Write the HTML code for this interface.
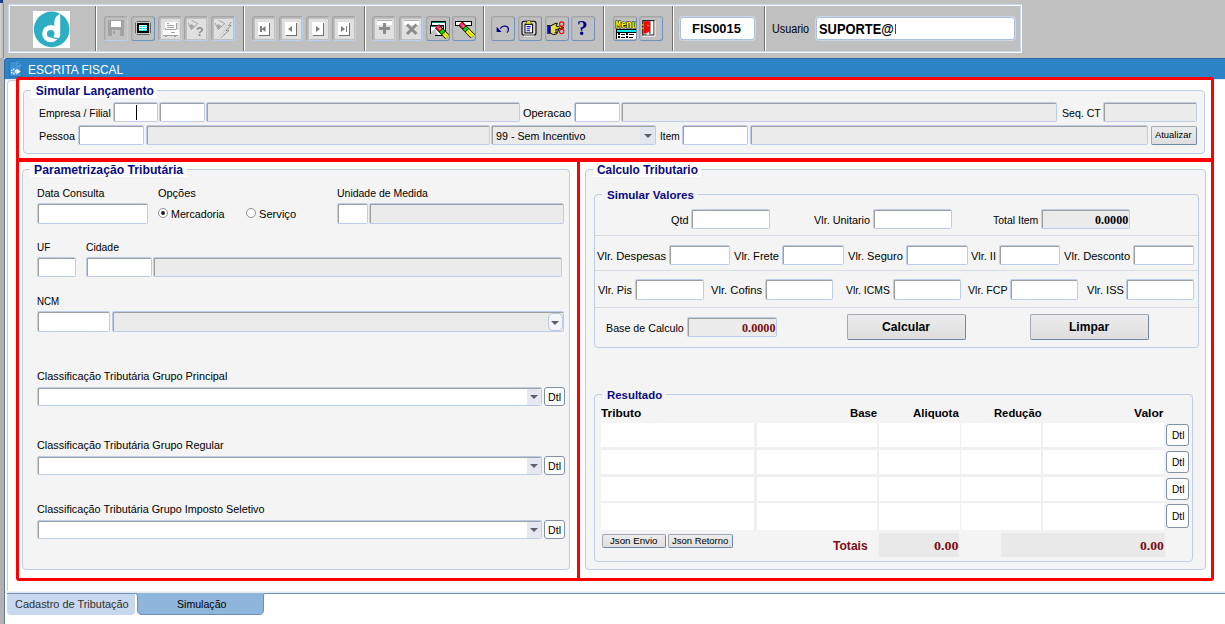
<!DOCTYPE html><html><head><meta charset="utf-8"><title>ESCRITA FISCAL</title><style>
*{box-sizing:border-box;margin:0;padding:0}
html,body{width:1225px;height:624px;overflow:hidden;background:#fff;font-family:"Liberation Sans",sans-serif;font-size:11px;color:#000}
.a{position:absolute}
.t{position:absolute;white-space:nowrap;transform-origin:0 0;color:#000}
.in{position:absolute;background:#fff;border:1px solid #bccee7;border-radius:1.5px;box-shadow:inset 1px 1px 0 #a0a0a0}
.g{position:absolute;background:#ebebeb;border:1px solid #bccee7;border-radius:1.5px;box-shadow:inset 1px 1px 0 #a0a0a0}
.gb{position:absolute;background:#f4f4f4;border:1px solid #bccde4;border-radius:4px}
.btn{position:absolute;background:linear-gradient(#ececec,#dedede);border:1px solid #a3a9b3;border-right-color:#6f87a6;border-bottom-color:#6f87a6;border-radius:2px}
.dtl{position:absolute;background:#fff;border:1px solid #8091a8;border-radius:3px}
.sep{position:absolute;top:6px;width:2px;height:45px;border-left:1px solid #707070;border-right:1px solid #fff}
.cell{position:absolute;background:#fff}
</style></head><body>
<div class="a" style="left:0px;top:0px;width:1225px;height:58px;background:#c0c0c0"></div>
<div class="a" style="left:0px;top:0px;width:4px;height:624px;background:#b2b2b2"></div>
<div class="a" style="left:0px;top:3px;width:4px;height:55px;background:linear-gradient(90deg,#d2d2d2,#bdbdbd 70%,#8e8e8e 76%)"></div>
<div class="a" style="left:4px;top:58px;width:1px;height:566px;background:#5f7896"></div>
<div class="a" style="left:0px;top:0px;width:3px;height:3px;background:#1c3f8c"></div>
<div class="a" style="left:8px;top:4px;width:1014px;height:49px;border:1px solid #c6d8f1;border-right-color:#fbfcfe;border-bottom-color:#fbfcfe"></div>
<div class="a" style="left:9px;top:5px;width:1012px;height:47px;border:1px solid #f7f9fd;border-right-color:#c6d8f1;border-bottom-color:#c6d8f1"></div>
<svg class="a" style="left:32.8px;top:10.8px" width="37.4" height="37.4" viewBox="0 0 37.4 37.4"><rect width="37.4" height="37.4" fill="#fff"/><circle cx="18.65" cy="18.4" r="17.8" fill="#2eaec2"/><circle cx="17.8" cy="22.7" r="8.6" fill="#fff"/><path d="M27.2 2.8 C23.5 4.6 21.3 7.4 21.3 11.4 L21.3 22 L24 26 L25 27.5 Q27.2 26.6 27.2 24.2 Z" fill="#fff"/><circle cx="17.7" cy="22.8" r="3.8" fill="#2eaec2"/><path d="M18.6 25.9 Q21.5 27.7 25.2 27.6" fill="none" stroke="#2eaec2" stroke-width="1.3"/></svg>
<div class="sep" style="left:95px"></div>
<div class="sep" style="left:243px"></div>
<div class="sep" style="left:364px"></div>
<div class="sep" style="left:483px"></div>
<div class="sep" style="left:603px"></div>
<div class="sep" style="left:672px"></div>
<div class="sep" style="left:764px"></div>
<div class="a" style="left:104px;top:16px;width:24px;height:25px;border:1px solid #a4a4a4;border-right-color:#b9d0ee;border-bottom-color:#b9d0ee;border-radius:3px;overflow:hidden;box-shadow:inset 1px 1px 0 #b6b6b6"><svg class="a" style="left:3px;top:3px;overflow:visible" width="16" height="17" viewBox="0 0 16 17" shape-rendering="crispEdges"><rect x="0" y="0" width="16" height="16" rx="1" fill="#a2a2a2"/><rect x="3" y="1" width="10" height="6" fill="#fff"/><rect x="4" y="10" width="8" height="6" fill="#c0c0c0"/><rect x="5" y="11" width="2" height="3" fill="#a2a2a2"/></svg></div>
<div class="a" style="left:130.5px;top:16px;width:24px;height:25px;border:1px solid #a4a4a4;border-right-color:#6d90bf;border-bottom-color:#6d90bf;border-radius:3px;overflow:hidden;box-shadow:inset 1px 1px 0 #b6b6b6"><svg class="a" style="left:3px;top:3px;overflow:visible" width="16" height="17" viewBox="0 0 16 17" shape-rendering="crispEdges"><rect x="0.5" y="1.5" width="15" height="13" rx="2" fill="#000" shape-rendering="auto"/><rect x="1.5" y="2.5" width="13" height="11" fill="none" stroke="#c8c8c8" stroke-width="1"/><rect x="3" y="4" width="10" height="8" fill="#00e5ee"/><g fill="#e0ffff"><rect x="4" y="5" width="8" height="1"/><rect x="4" y="7" width="8" height="1"/><rect x="4" y="9" width="8" height="1"/><rect x="4" y="4" width="1" height="8" opacity=".5"/><rect x="7" y="4" width="1" height="8" opacity=".5"/><rect x="10" y="4" width="1" height="8" opacity=".5"/></g><rect x="3.5" y="4.5" width="9" height="7" fill="none" stroke="#000" stroke-width="1"/></svg></div>
<div class="a" style="left:157.5px;top:16px;width:24px;height:25px;border:1px solid #a4a4a4;border-right-color:#b9d0ee;border-bottom-color:#b9d0ee;border-radius:3px;overflow:hidden;box-shadow:inset 1px 1px 0 #b6b6b6"><div class="a" style="left:2px;top:2px;width:19px;height:20px;background:#e0e0e0"></div><svg class="a" style="left:3px;top:3px;overflow:visible" width="16" height="17" viewBox="0 0 16 17" shape-rendering="crispEdges"><rect x="3" y="2" width="12" height="7" fill="#fff"/><rect x="5" y="3" width="2" height="1" fill="#a2a2a2"/><rect x="5" y="5" width="7" height="1" fill="#a2a2a2"/><rect x="5" y="7" width="7" height="1" fill="#a2a2a2"/><rect x="3" y="8" width="1" height="2" fill="#a2a2a2"/><rect x="3" y="9" width="11" height="1" fill="#a2a2a2"/><rect x="14" y="3" width="1" height="6" fill="#a2a2a2"/><rect x="1" y="10" width="16" height="5" fill="#fff"/><rect x="9" y="12" width="4" height="1" fill="#a2a2a2"/><rect x="1" y="15" width="15" height="1" fill="#a2a2a2"/><rect x="3" y="16" width="2" height="1" fill="#a2a2a2"/><rect x="12" y="16" width="2" height="1" fill="#a2a2a2"/></svg></div>
<div class="a" style="left:184px;top:16px;width:24px;height:25px;border:1px solid #a4a4a4;border-right-color:#b9d0ee;border-bottom-color:#b9d0ee;border-radius:3px;overflow:hidden;box-shadow:inset 1px 1px 0 #b6b6b6"><div class="a" style="left:2px;top:2px;width:19px;height:20px;background:#e0e0e0"></div><svg class="a" style="left:3px;top:3px;overflow:visible" width="16" height="17" viewBox="0 0 16 17" shape-rendering="crispEdges"><g shape-rendering="auto"><path d="M0.2 3 L3.2 9.6 L9.8 3.6 L3.6 0.2" fill="none" stroke="#9a9a9a" stroke-width="0.9"/><path d="M1.6 5.2 L3.2 9 L6.2 6.2 L3.6 4 Z" fill="#a4a4a4"/></g></svg><div class="a" style="left:10.6px;top:8px;font:bold 12.5px/14px 'Liberation Sans',sans-serif;color:#8a8a8a;will-change:transform">?</div></div>
<div class="a" style="left:210.5px;top:16px;width:24px;height:25px;border:1px solid #a4a4a4;border-right-color:#b9d0ee;border-bottom-color:#b9d0ee;border-radius:3px;overflow:hidden;box-shadow:inset 1px 1px 0 #b6b6b6"><div class="a" style="left:2px;top:2px;width:19px;height:20px;background:#e0e0e0"></div><svg class="a" style="left:3px;top:3px;overflow:visible" width="16" height="17" viewBox="0 0 16 17" shape-rendering="crispEdges"><g shape-rendering="auto"><path d="M0.2 3 L3.2 9.6 L9.8 3.6 L3.6 0.2" fill="none" stroke="#9a9a9a" stroke-width="0.9"/><path d="M1.6 5.2 L3.2 9 L6.2 6.2 L3.6 4 Z" fill="#a4a4a4"/></g><g shape-rendering="auto" fill="none" stroke-width="1"><path d="M13 2.4 L10.4 5.7 L12.8 5.7 L7.6 10.8 L10.5 10.8 L3.4 17" stroke="#cdcdcd"/><path d="M16.3 2.2 L13.7 5.5 L16.1 5.5 L11 10.6 L13.9 10.6 L6 17.6" stroke="#6e6e6e" stroke-dasharray="1.2 .5"/></g></svg></div>
<div class="a" style="left:252px;top:16px;width:24px;height:25px;border:1px solid #a4a4a4;border-right-color:#b9d0ee;border-bottom-color:#b9d0ee;border-radius:3px;overflow:hidden;box-shadow:inset 1px 1px 0 #b6b6b6"><div class="a" style="left:2px;top:2px;width:19px;height:20px;background:#e0e0e0"></div><svg class="a" style="left:3px;top:3px;overflow:visible" width="16" height="17" viewBox="0 0 16 17" shape-rendering="crispEdges"><rect x="2" y="2" width="12" height="13" fill="#fff"/><rect x="13" y="3" width="1" height="13" fill="#707070"/><rect x="3" y="15" width="11" height="1" fill="#707070"/><rect x="4" y="6" width="1.5" height="6" fill="#808080"/><path d="M9.5 6 L9.5 12 L5.5 9 Z" fill="#808080" shape-rendering="auto"/></svg></div>
<div class="a" style="left:278.5px;top:16px;width:24px;height:25px;border:1px solid #a4a4a4;border-right-color:#b9d0ee;border-bottom-color:#b9d0ee;border-radius:3px;overflow:hidden;box-shadow:inset 1px 1px 0 #b6b6b6"><div class="a" style="left:2px;top:2px;width:19px;height:20px;background:#e0e0e0"></div><svg class="a" style="left:3px;top:3px;overflow:visible" width="16" height="17" viewBox="0 0 16 17" shape-rendering="crispEdges"><rect x="2" y="2" width="12" height="13" fill="#fff"/><rect x="13" y="3" width="1" height="13" fill="#707070"/><rect x="3" y="15" width="11" height="1" fill="#707070"/><path d="M9 6 L9 12 L5 9 Z" fill="#808080" shape-rendering="auto"/></svg></div>
<div class="a" style="left:305.5px;top:16px;width:24px;height:25px;border:1px solid #a4a4a4;border-right-color:#b9d0ee;border-bottom-color:#b9d0ee;border-radius:3px;overflow:hidden;box-shadow:inset 1px 1px 0 #b6b6b6"><div class="a" style="left:2px;top:2px;width:19px;height:20px;background:#e0e0e0"></div><svg class="a" style="left:3px;top:3px;overflow:visible" width="16" height="17" viewBox="0 0 16 17" shape-rendering="crispEdges"><rect x="2" y="2" width="12" height="13" fill="#fff"/><rect x="13" y="3" width="1" height="13" fill="#707070"/><rect x="3" y="15" width="11" height="1" fill="#707070"/><path d="M6 6 L6 12 L10 9 Z" fill="#808080" shape-rendering="auto"/></svg></div>
<div class="a" style="left:332px;top:16px;width:24px;height:25px;border:1px solid #a4a4a4;border-right-color:#b9d0ee;border-bottom-color:#b9d0ee;border-radius:3px;overflow:hidden;box-shadow:inset 1px 1px 0 #b6b6b6"><div class="a" style="left:2px;top:2px;width:19px;height:20px;background:#e0e0e0"></div><svg class="a" style="left:3px;top:3px;overflow:visible" width="16" height="17" viewBox="0 0 16 17" shape-rendering="crispEdges"><rect x="2" y="2" width="12" height="13" fill="#fff"/><rect x="13" y="3" width="1" height="13" fill="#707070"/><rect x="3" y="15" width="11" height="1" fill="#707070"/><path d="M5 6 L5 12 L9 9 Z" fill="#808080" shape-rendering="auto"/><rect x="9.5" y="6" width="1.5" height="6" fill="#808080"/></svg></div>
<div class="a" style="left:372px;top:16px;width:24px;height:25px;border:1px solid #a4a4a4;border-right-color:#b9d0ee;border-bottom-color:#b9d0ee;border-radius:3px;overflow:hidden;box-shadow:inset 1px 1px 0 #b6b6b6"><div class="a" style="left:2px;top:2px;width:19px;height:20px;background:#e0e0e0"></div><svg class="a" style="left:3px;top:3px;overflow:visible" width="16" height="17" viewBox="0 0 16 17" shape-rendering="crispEdges"><rect x="1" y="1" width="15" height="4" fill="#fff"/><rect x="1" y="0" width="15" height="1" fill="#b0b0b0"/><rect x="7" y="3" width="3" height="11" fill="#8c8c8c"/><rect x="3" y="7" width="11" height="3" fill="#8c8c8c"/></svg></div>
<div class="a" style="left:398.5px;top:16px;width:24px;height:25px;border:1px solid #a4a4a4;border-right-color:#b9d0ee;border-bottom-color:#b9d0ee;border-radius:3px;overflow:hidden;box-shadow:inset 1px 1px 0 #b6b6b6"><div class="a" style="left:2px;top:2px;width:19px;height:20px;background:#e0e0e0"></div><svg class="a" style="left:3px;top:3px;overflow:visible" width="16" height="17" viewBox="0 0 16 17" shape-rendering="crispEdges"><rect x="1" y="1" width="15" height="4" fill="#fff"/><rect x="1" y="0" width="15" height="1" fill="#b0b0b0"/><g shape-rendering="auto" stroke="#8c8c8c" stroke-width="3"><path d="M4 4.5 L13.5 14"/><path d="M13.5 4.5 L4 14"/></g></svg></div>
<div class="a" style="left:425.5px;top:16px;width:24px;height:25px;border:1px solid #a4a4a4;border-right-color:#6d90bf;border-bottom-color:#6d90bf;border-radius:3px;overflow:hidden;box-shadow:inset 1px 1px 0 #b6b6b6"><svg class="a" style="left:3px;top:3px;overflow:visible" width="16" height="17" viewBox="0 0 16 17" shape-rendering="crispEdges"><rect x="1.5" y="1.5" width="14" height="10" fill="#fff" stroke="#000" stroke-width="1"/><rect x="2" y="2" width="13" height="1" fill="#008b8b"/><rect x="0.5" y="5.5" width="13" height="10" fill="#fff" stroke="#000" stroke-width="1"/><rect x="1" y="6" width="12" height="1.4" fill="#008b8b"/><path d="M1 15 L1 12 L5 9 L8 15 Z" fill="#c0c0c0" shape-rendering="auto"/><rect x="0" y="14" width="5" height="3" fill="#c0c0c0"/><g shape-rendering="auto" transform="translate(7.4,6.6) rotate(46)"><rect x="-0.5" y="-2.8" width="15.0" height="5.6" fill="#000"/><rect x="-0.8" y="-2.1" width="5.8" height="4.2" rx="1.2" fill="#ff1a1a"/><rect x="0.2" y="-0.9000000000000001" width="4" height="1.8000000000000003" fill="#ff33dd"/><rect x="2.8" y="-1.1" width="1.6" height="1.6" fill="#ffd000"/><rect x="5.4" y="-2.1" width="3.2" height="4.2" fill="#00dd00"/><rect x="9.2" y="-2.1" width="5.300000000000001" height="4.2" fill="#ffff00"/><rect x="9.2" y="-0.3" width="5.300000000000001" height="0.7" fill="#b0b000"/></g></svg></div>
<div class="a" style="left:452px;top:16px;width:24px;height:25px;border:1px solid #a4a4a4;border-right-color:#6d90bf;border-bottom-color:#6d90bf;border-radius:3px;overflow:hidden;box-shadow:inset 1px 1px 0 #b6b6b6"><svg class="a" style="left:3px;top:3px;overflow:visible" width="16" height="17" viewBox="0 0 16 17" shape-rendering="crispEdges"><rect x="-0.2" y="1.5" width="15.5" height="4" fill="#fff" stroke="#000" stroke-width="1"/><g shape-rendering="auto" transform="translate(4.8,3.8) rotate(46)"><rect x="-0.5" y="-2.8" width="18.0" height="5.6" fill="#000"/><rect x="-0.8" y="-2.1" width="5.8" height="4.2" rx="1.2" fill="#ff1a1a"/><rect x="0.2" y="-0.9000000000000001" width="4" height="1.8000000000000003" fill="#ff33dd"/><rect x="2.8" y="-1.1" width="1.6" height="1.6" fill="#ffd000"/><rect x="5.4" y="-2.1" width="3.2" height="4.2" fill="#00dd00"/><rect x="9.2" y="-2.1" width="8.3" height="4.2" fill="#ffff00"/><rect x="9.2" y="-0.3" width="8.3" height="0.7" fill="#b0b000"/></g></svg></div>
<div class="a" style="left:490.5px;top:16px;width:24px;height:25px;border:1px solid #a4a4a4;border-right-color:#6d90bf;border-bottom-color:#6d90bf;border-radius:3px;overflow:hidden;box-shadow:inset 1px 1px 0 #b6b6b6"><svg class="a" style="left:3px;top:3px;overflow:visible" width="16" height="17" viewBox="0 0 16 17" shape-rendering="crispEdges"><g shape-rendering="auto"><path d="M5.2 8.6 Q7 6.2 9 6.2 L10.6 6.2 Q13.4 6.6 13.4 9.4 Q13.4 11.2 12 12.6" fill="none" stroke="#00008b" stroke-width="1.2"/><path d="M1.6 6.8 L1.6 12 L6.6 12 Z" fill="#00008b"/></g></svg></div>
<div class="a" style="left:517.5px;top:16px;width:24px;height:25px;border:1px solid #a4a4a4;border-right-color:#6d90bf;border-bottom-color:#6d90bf;border-radius:3px;overflow:hidden;box-shadow:inset 1px 1px 0 #b6b6b6"><svg class="a" style="left:3px;top:3px;overflow:visible" width="16" height="17" viewBox="0 0 16 17" shape-rendering="crispEdges"><g shape-rendering="auto"><rect x="0" y="1.2" width="14" height="14" rx="2.2" fill="#d4d4d4" stroke="#000" stroke-width="1.1"/><path d="M2 16 L12 16" stroke="#fff" stroke-width="1.2"/><rect x="3" y="4.3" width="7.6" height="8.6" fill="#fff" stroke="#000" stroke-width="1"/><path d="M4.6 6.6 L8.6 6.6 M4.6 8.7 L8 8.7 M4.6 10.7 L8 10.7" stroke="#0000ff" stroke-width="1.1"/><path d="M3.4 4 L5.8 0.6 L7.6 0.6 L10 4 Z" fill="#ffff00" stroke="#000" stroke-width=".5"/><circle cx="6.7" cy="2.2" r=".8" fill="#c0c0c0"/></g></svg></div>
<div class="a" style="left:544.5px;top:16px;width:24px;height:25px;border:1px solid #a4a4a4;border-right-color:#6d90bf;border-bottom-color:#6d90bf;border-radius:3px;overflow:hidden;box-shadow:inset 1px 1px 0 #b6b6b6"><svg class="a" style="left:3px;top:3px;overflow:visible" width="16" height="17" viewBox="0 0 16 17" shape-rendering="crispEdges"><g shape-rendering="auto"><rect x="-1.4" y="5.3" width="2.6" height="8.3" fill="#0000ff" stroke="#000" stroke-width=".5"/><path d="M1.2 6.2 L4 4.6 L7 3.2 L8.4 3.4 L7 5.8 L9 7 L14.4 7 L14.4 8.4 L9.4 8.6 L9.6 10 L9 11.4 L8.4 12.6 L7.6 14 L4.4 14.6 L1.2 13 Z" fill="#e6e058" stroke="#000" stroke-width="1"/><path d="M6.2 9.4 L9.2 9.4 M6 11 L8.8 11 M5.6 12.6 L8 12.6" stroke="#000" stroke-width=".9"/><path d="M7 7.6 L13 7.6" stroke="#f4f400" stroke-width=".9" stroke-dasharray="1 1"/><g fill="none" stroke="#ff0000" stroke-width="1.1"><circle cx="12.7" cy="4.1" r="2.2"/><circle cx="12.7" cy="11.4" r="2.2"/><path d="M12 6 L13.4 9.4 M13.4 6 L12 9.4"/></g></g></svg></div>
<div class="a" style="left:570.5px;top:16px;width:24px;height:25px;border:1px solid #a4a4a4;border-right-color:#6d90bf;border-bottom-color:#6d90bf;border-radius:3px;overflow:hidden;box-shadow:inset 1px 1px 0 #b6b6b6"><svg class="a" style="left:3px;top:3px;overflow:visible" width="16" height="17" viewBox="0 0 16 17" shape-rendering="crispEdges"></svg><div class="a" style="left:5.6px;top:-2.5px;font:bold 21.5px/26px 'Liberation Serif',serif;color:#00008b;will-change:transform">?</div></div>
<div class="a" style="left:612.5px;top:16px;width:24px;height:25px;border:1px solid #a4a4a4;border-right-color:#6d90bf;border-bottom-color:#6d90bf;border-radius:3px;overflow:hidden;box-shadow:inset 1px 1px 0 #b6b6b6"><svg class="a" style="left:3px;top:3px;overflow:visible" width="16" height="17" viewBox="0 0 16 17" shape-rendering="crispEdges"><g shape-rendering="auto"><text x="-1.4" y="7.6" font-family="Liberation Mono,monospace" font-weight="bold" font-size="10.5" fill="#ffff00" stroke="#000" stroke-width="1.1" paint-order="stroke" textLength="21.5" lengthAdjust="spacingAndGlyphs">Menu</text></g><rect x="-1.5" y="9" width="20" height="1" fill="#000"/><rect x="-0.5" y="10" width="19" height="1.5" fill="#00f0f0"/><rect x="-1.5" y="11.5" width="20" height="1" fill="#000"/><rect x="-0.5" y="12.5" width="19" height="6" fill="#fff"/><rect x="-1.5" y="9" width="1" height="10" fill="#000"/><g fill="#000"><rect x="1" y="13.3" width="2" height="1.4"/><rect x="4" y="13.6" width="4" height="1"/><rect x="9" y="13.3" width="2" height="1.4"/><rect x="12" y="13.6" width="5" height="1"/><rect x="1" y="16.4" width="2" height="1.4"/><rect x="4" y="16.7" width="4" height="1"/><rect x="9" y="16.4" width="2" height="1.4"/><rect x="12" y="16.7" width="4" height="1"/></g></svg></div>
<div class="a" style="left:638.5px;top:16px;width:24px;height:25px;border:1px solid #a4a4a4;border-right-color:#6d90bf;border-bottom-color:#6d90bf;border-radius:3px;overflow:hidden;box-shadow:inset 1px 1px 0 #b6b6b6"><svg class="a" style="left:3px;top:3px;overflow:visible" width="16" height="17" viewBox="0 0 16 17" shape-rendering="crispEdges"><g shape-rendering="auto"><rect x="-0.2" y="0.7" width="11.2" height="14.4" fill="#d8d8d8" stroke="#000" stroke-width="1"/><path d="M-0.5 16.1 L12 16.1 M12 1 L12 16" stroke="#fff" stroke-width="1"/><rect x="7" y="1.4" width="3.2" height="12.4" fill="#fff"/><rect x="6.4" y="1.4" width="1" height="12.4" fill="#000"/><path d="M6.4 13.8 L4 14.8" stroke="#fff" stroke-width="1"/><path d="M0.5 1.2 L6.4 1.2 L6.4 11.6 L2.6 13.4 L0.5 13.4 Z" fill="#ff0000"/><rect x="4.2" y="4.9" width="1.3" height="1.3" fill="#ffff00"/><rect x="-0.8" y="4.2" width="1.3" height="1.1" fill="#ffff00"/><rect x="-0.8" y="7.8" width="1.3" height="1.1" fill="#ffff00"/></g></svg></div>
<div class="a" style="left:680px;top:17px;width:75px;height:23px;background:#fff;border:1px solid #a9c0e2;border-radius:3px;box-shadow:0 0 0 1px rgba(215,228,245,.6)"></div>
<div class="t" style="left:692.00px;top:21px;font-size:13.5px;line-height:16px;font-weight:bold;transform:scaleX(0.9583);">FIS0015</div>
<div class="t" style="left:772.00px;top:22px;font-size:12px;line-height:14px;transform:scaleX(0.8973);">Usuario</div>
<div class="a" style="left:816px;top:17px;width:199px;height:23px;background:#fff;border:1px solid #a9c0e2;border-radius:3px;box-shadow:0 0 0 1px rgba(215,228,245,.6)"></div>
<div class="t" style="left:819.00px;top:20px;font-size:15px;line-height:18px;font-weight:bold;transform:scaleX(0.8584);">SUPORTE@</div>
<div class="a" style="left:895px;top:24px;width:1px;height:10px;background:#444"></div>
<div class="a" style="left:4px;top:58px;width:1221px;height:21px;background:#fff"></div>
<div class="a" style="left:4px;top:58px;width:1221px;height:21px;background:#2c83c6;border-top-left-radius:3px;border-left:1px solid #2a6aa8"></div>
<div class="a" style="left:6px;top:58px;width:1219px;height:1px;background:#2a64a6"></div>
<div class="t" style="left:28.10px;top:63px;font-size:12px;line-height:14px;color:#fff;transform:scaleX(0.9937);">ESCRITA FISCAL</div>
<svg class="a" style="left:9px;top:61px" width="13" height="16" viewBox="0 0 13 16"><path d="M0.5 0.5 L8 0.5 L12.5 5 L12.5 15.5 L0.5 15.5 Z" fill="#3e92d4" stroke="#2872b4" stroke-width="1"/><path d="M8 0.5 L8 5 L12.5 5 Z" fill="#2c83c6" stroke="#5fa5dd" stroke-width=".8"/><circle cx="4.6" cy="10.5" r="2.1" fill="none" stroke="#fff" stroke-width="1.8" stroke-dasharray="1.2 .9"/><path d="M7.3 7.6 L11.6 10.5 L7.3 13.4 Z" fill="#fff"/></svg>
<div class="a" style="left:5px;top:79px;width:1220px;height:1px;background:#e6ebf3"></div>
<div class="a" style="left:7px;top:80px;width:13px;height:513px;border-left:1px solid #c3cfdf;border-top:1px solid #c3cfdf;border-top-left-radius:4px"></div>
<div class="a" style="left:5px;top:591px;width:1220px;height:2px;background:linear-gradient(#f4f6fa,#dfe6f0)"></div>
<div class="a" style="left:7px;top:593px;width:1218px;height:1px;background:#7391b5"></div>
<div class="a" style="left:16px;top:77px;width:1198px;height:504px;border:3px solid #fe0000;border-radius:3px"></div>
<div class="a" style="left:17px;top:158px;width:1196px;height:4px;background:#fe0000"></div>
<div class="a" style="left:577px;top:159px;width:3px;height:421px;background:#fe0000"></div>
<div class="gb" style="left:23px;top:90px;width:1182px;height:64px;"></div>
<div class="a" style="left:31px;top:83px;width:126px;height:15px;background:#fff"></div>
<div class="t" style="left:35.80px;top:84px;font-size:12px;line-height:14px;font-weight:bold;color:#0a0a82;">Simular Lançamento</div>
<div class="t" style="left:38.80px;top:107px;font-size:11px;line-height:13px;transform:scaleX(0.9460);">Empresa / Filial</div>
<div class="in" style="left:113px;top:102px;width:45px;height:20px;"><div class="a" style="left:22px;top:2px;width:1px;height:15px;background:#000"></div></div>
<div class="in" style="left:159px;top:102px;width:46px;height:20px;"></div>
<div class="g" style="left:206px;top:102px;width:314px;height:20px;"></div>
<div class="t" style="left:522.90px;top:107px;font-size:11px;line-height:13px;">Operacao</div>
<div class="in" style="left:574px;top:102px;width:46px;height:20px;"></div>
<div class="g" style="left:621px;top:102px;width:436px;height:20px;"></div>
<div class="t" style="left:1061.70px;top:107px;font-size:11px;line-height:13px;transform:scaleX(0.9617);">Seq. CT</div>
<div class="g" style="left:1103px;top:102px;width:94px;height:20px;"></div>
<div class="t" style="left:38.80px;top:130px;font-size:11px;line-height:13px;transform:scaleX(0.9812);">Pessoa</div>
<div class="in" style="left:78px;top:125px;width:66px;height:20px;"></div>
<div class="g" style="left:146px;top:125px;width:344px;height:20px;"></div>
<div class="g" style="left:491px;top:125px;width:165px;height:20px;"><div class="a" style="right:0;top:1px;width:15px;height:17px;background:#e2e6ee;border-radius:0 2px 2px 0"></div><div class="a" style="right:3px;top:8px;border:4px solid transparent;border-top:4px solid #5a5f6a;border-bottom:0"></div></div>
<div class="t" style="left:495.90px;top:130px;font-size:11px;line-height:13px;transform:scaleX(0.9749);">99 - Sem Incentivo</div>
<div class="t" style="left:660.00px;top:130px;font-size:11px;line-height:13px;transform:scaleX(0.9209);">Item</div>
<div class="in" style="left:682px;top:125px;width:66px;height:20px;"></div>
<div class="g" style="left:750px;top:125px;width:398px;height:20px;"></div>
<div class="btn" style="left:1151px;top:126px;width:46px;height:19px;"></div>
<div class="t" style="left:1155.10px;top:130px;font-size:9px;line-height:11px;transform:scaleX(1.0424);">Atualizar</div>
<div class="gb" style="left:22px;top:169px;width:548px;height:401px;"></div>
<div class="a" style="left:30px;top:163px;width:157px;height:14px;background:#fff"></div>
<div class="t" style="left:34.20px;top:163px;font-size:12px;line-height:14px;font-weight:bold;color:#0a0a82;transform:scaleX(1.0162);">Parametrização Tributária</div>
<div class="t" style="left:36.60px;top:187px;font-size:11px;line-height:13px;transform:scaleX(0.9670);">Data Consulta</div>
<div class="in" style="left:37px;top:203px;width:111px;height:21px;"></div>
<div class="t" style="left:157.90px;top:187px;font-size:11px;line-height:13px;">Opções</div>
<div class="a" style="left:158px;top:208px;width:10px;height:10px;border:1px solid #8e8e8e;border-radius:50%;background:#fff"><div class="a" style="left:2px;top:2px;width:4px;height:4px;border-radius:50%;background:#222"></div></div>
<div class="t" style="left:171.10px;top:208px;font-size:11px;line-height:13px;transform:scaleX(0.9724);">Mercadoria</div>
<div class="a" style="left:246px;top:208px;width:10px;height:10px;border:1px solid #8e8e8e;border-radius:50%;background:#fff"></div>
<div class="t" style="left:259.00px;top:208px;font-size:11px;line-height:13px;transform:scaleX(1.0115);">Serviço</div>
<div class="t" style="left:337.10px;top:187px;font-size:11px;line-height:13px;transform:scaleX(0.9518);">Unidade de Medida</div>
<div class="in" style="left:337px;top:203px;width:31px;height:21px;"></div>
<div class="g" style="left:369px;top:203px;width:195px;height:21px;"></div>
<div class="t" style="left:36.70px;top:241px;font-size:11px;line-height:13px;transform:scaleX(0.9002);">UF</div>
<div class="in" style="left:37px;top:257px;width:39px;height:20px;"></div>
<div class="t" style="left:86.30px;top:241px;font-size:11px;line-height:13px;transform:scaleX(0.9439);">Cidade</div>
<div class="in" style="left:86px;top:257px;width:66px;height:20px;"></div>
<div class="g" style="left:153px;top:257px;width:409px;height:20px;"></div>
<div class="t" style="left:36.80px;top:295px;font-size:11px;line-height:13px;transform:scaleX(0.8862);">NCM</div>
<div class="in" style="left:37px;top:311px;width:73px;height:21px;"></div>
<div class="g" style="left:112px;top:311px;width:452px;height:21px;"><div class="a" style="right:0px;top:1px;width:15px;height:18px;border:1px solid #b9c9df;border-radius:5px;background:#f3f5f8"></div><div class="a" style="right:4px;top:9px;border:4px solid transparent;border-top:4px solid #5a5f6a;border-bottom:0"></div></div>
<div class="t" style="left:36.60px;top:370px;font-size:11px;line-height:13px;transform:scaleX(0.9882);">Classificação Tributária Grupo Principal</div>
<div class="in" style="left:37px;top:387px;width:505px;height:19px;"><div class="a" style="right:0;top:1px;width:14px;height:16px;background:#e4e8f0;border-radius:0 2px 2px 0"></div><div class="a" style="right:3px;top:7px;border:4px solid transparent;border-top:4px solid #5a5f6a;border-bottom:0"></div></div>
<div class="dtl" style="left:544px;top:387px;width:21px;height:19px;"></div>
<div class="t" style="left:548.00px;top:391px;font-size:11px;line-height:13px;transform:scaleX(0.9670);">Dtl</div>
<div class="t" style="left:36.60px;top:439px;font-size:11px;line-height:13px;transform:scaleX(0.9878);">Classificação Tributária Grupo Regular</div>
<div class="in" style="left:37px;top:456px;width:505px;height:19px;"><div class="a" style="right:0;top:1px;width:14px;height:16px;background:#e4e8f0;border-radius:0 2px 2px 0"></div><div class="a" style="right:3px;top:7px;border:4px solid transparent;border-top:4px solid #5a5f6a;border-bottom:0"></div></div>
<div class="dtl" style="left:544px;top:456px;width:21px;height:19px;"></div>
<div class="t" style="left:548.00px;top:460px;font-size:11px;line-height:13px;transform:scaleX(0.9670);">Dtl</div>
<div class="t" style="left:36.60px;top:503px;font-size:11px;line-height:13px;transform:scaleX(0.9819);">Classificação Tributária Grupo Imposto Seletivo</div>
<div class="in" style="left:37px;top:520px;width:505px;height:19px;"><div class="a" style="right:0;top:1px;width:14px;height:16px;background:#e4e8f0;border-radius:0 2px 2px 0"></div><div class="a" style="right:3px;top:7px;border:4px solid transparent;border-top:4px solid #5a5f6a;border-bottom:0"></div></div>
<div class="dtl" style="left:544px;top:520px;width:21px;height:19px;"></div>
<div class="t" style="left:548.00px;top:524px;font-size:11px;line-height:13px;transform:scaleX(0.9670);">Dtl</div>
<div class="gb" style="left:585px;top:169px;width:621px;height:401px;"></div>
<div class="a" style="left:593px;top:163px;width:108px;height:14px;background:#fff"></div>
<div class="t" style="left:596.70px;top:163px;font-size:12px;line-height:14px;font-weight:bold;color:#0a0a82;transform:scaleX(0.9892);">Calculo Tributario</div>
<div class="gb" style="left:594px;top:194px;width:605px;height:154px;"></div>
<div class="a" style="left:602px;top:188px;width:96px;height:13px;background:#f4f4f4"></div>
<div class="t" style="left:606.70px;top:188px;font-size:11.5px;line-height:14px;font-weight:bold;color:#0a0a82;transform:scaleX(1.0082);">Simular Valores</div>
<div class="a" style="left:595px;top:235px;width:603px;height:1px;background:#d5dce6"></div>
<div class="a" style="left:595px;top:270px;width:603px;height:1px;background:#d5dce6"></div>
<div class="a" style="left:595px;top:307px;width:603px;height:1px;background:#d5dce6"></div>
<div class="t" style="left:671.00px;top:214px;font-size:11px;line-height:13px;transform:scaleX(0.9871);">Qtd</div>
<div class="in" style="left:691px;top:209px;width:79px;height:20px;"></div>
<div class="t" style="left:814.00px;top:214px;font-size:11px;line-height:13px;transform:scaleX(0.9850);">Vlr. Unitario</div>
<div class="in" style="left:873px;top:209px;width:79px;height:20px;"></div>
<div class="t" style="left:992.90px;top:214px;font-size:11px;line-height:13px;transform:scaleX(0.9501);">Total Item</div>
<div class="g" style="left:1041px;top:209px;width:89px;height:20px;"></div>
<div class="t" style="left:1094.70px;top:213px;font-size:12px;line-height:14px;font-weight:bold;font-family:'Liberation Serif',serif;transform:scaleX(1.0061);">0.0000</div>
<div class="t" style="left:596.70px;top:250px;font-size:11px;line-height:13px;transform:scaleX(1.0168);">Vlr. Despesas</div>
<div class="in" style="left:669px;top:245px;width:61px;height:20px;"></div>
<div class="t" style="left:733.90px;top:250px;font-size:11px;line-height:13px;transform:scaleX(1.0085);">Vlr. Frete</div>
<div class="in" style="left:782px;top:245px;width:62px;height:20px;"></div>
<div class="t" style="left:848.00px;top:250px;font-size:11px;line-height:13px;transform:scaleX(1.0089);">Vlr. Seguro</div>
<div class="in" style="left:906px;top:245px;width:62px;height:20px;"></div>
<div class="t" style="left:970.90px;top:250px;font-size:11px;line-height:13px;">Vlr. II</div>
<div class="in" style="left:999px;top:245px;width:61px;height:20px;"></div>
<div class="t" style="left:1063.60px;top:250px;font-size:11px;line-height:13px;transform:scaleX(1.0104);">Vlr. Desconto</div>
<div class="in" style="left:1133px;top:245px;width:61px;height:20px;"></div>
<div class="t" style="left:598.00px;top:284px;font-size:11px;line-height:13px;transform:scaleX(0.9903);">Vlr. Pis</div>
<div class="in" style="left:635px;top:279px;width:69px;height:21px;"></div>
<div class="t" style="left:710.60px;top:284px;font-size:11px;line-height:13px;transform:scaleX(1.0194);">Vlr. Cofins</div>
<div class="in" style="left:765px;top:279px;width:68px;height:21px;"></div>
<div class="t" style="left:845.80px;top:284px;font-size:11px;line-height:13px;transform:scaleX(0.9430);">Vlr. ICMS</div>
<div class="in" style="left:893px;top:279px;width:68px;height:21px;"></div>
<div class="t" style="left:967.90px;top:284px;font-size:11px;line-height:13px;transform:scaleX(0.9646);">Vlr. FCP</div>
<div class="in" style="left:1010px;top:279px;width:68px;height:21px;"></div>
<div class="t" style="left:1086.50px;top:284px;font-size:11px;line-height:13px;transform:scaleX(1.0060);">Vlr. ISS</div>
<div class="in" style="left:1126px;top:279px;width:68px;height:21px;"></div>
<div class="t" style="left:606.10px;top:322px;font-size:11px;line-height:13px;transform:scaleX(0.9713);">Base de Calculo</div>
<div class="g" style="left:687px;top:317px;width:90px;height:20px;"></div>
<div class="t" style="left:741.70px;top:321px;font-size:12px;line-height:14px;font-weight:bold;font-family:'Liberation Serif',serif;color:#7a0d14;transform:scaleX(1.0152);">0.0000</div>
<div class="btn" style="left:847px;top:314px;width:119px;height:26px;"></div>
<div class="t" style="left:882.40px;top:320px;font-size:12px;line-height:14px;font-weight:bold;transform:scaleX(1.0137);">Calcular</div>
<div class="btn" style="left:1030px;top:314px;width:119px;height:26px;"></div>
<div class="t" style="left:1069.00px;top:320px;font-size:12px;line-height:14px;font-weight:bold;transform:scaleX(1.0048);">Limpar</div>
<div class="gb" style="left:594px;top:394px;width:599px;height:168px;"></div>
<div class="a" style="left:602px;top:388px;width:64px;height:13px;background:#f4f4f4"></div>
<div class="t" style="left:607.00px;top:388px;font-size:11.5px;line-height:14px;font-weight:bold;color:#0a0a82;transform:scaleX(0.9913);">Resultado</div>
<div class="t" style="left:600.90px;top:406px;font-size:11.5px;line-height:14px;font-weight:bold;transform:scaleX(1.0344);">Tributo</div>
<div class="t" style="left:849.70px;top:406px;font-size:11.5px;line-height:14px;font-weight:bold;transform:scaleX(0.9894);">Base</div>
<div class="t" style="left:913.40px;top:406px;font-size:11.5px;line-height:14px;font-weight:bold;transform:scaleX(0.9958);">Aliquota</div>
<div class="t" style="left:993.60px;top:406px;font-size:11.5px;line-height:14px;font-weight:bold;transform:scaleX(0.9781);">Redução</div>
<div class="t" style="left:1133.70px;top:406px;font-size:11.5px;line-height:14px;font-weight:bold;transform:scaleX(1.0488);">Valor</div>
<div class="a" style="left:601px;top:423px;width:562.5px;height:106.5px;background:#f0f0f0"></div>
<div class="cell" style="left:601px;top:423px;width:153px;height:24px;"></div>
<div class="cell" style="left:757px;top:423px;width:120px;height:24px;"></div>
<div class="cell" style="left:879px;top:423px;width:80.5px;height:24px;"></div>
<div class="cell" style="left:961px;top:423px;width:80px;height:24px;"></div>
<div class="cell" style="left:1043px;top:423px;width:120.5px;height:24px;"></div>
<div class="dtl" style="left:1166px;top:424px;width:23px;height:22px;"></div>
<div class="t" style="left:1171.50px;top:429px;font-size:11px;line-height:13px;transform:scaleX(0.9223);">Dtl</div>
<div class="cell" style="left:601px;top:450px;width:153px;height:24px;"></div>
<div class="cell" style="left:757px;top:450px;width:120px;height:24px;"></div>
<div class="cell" style="left:879px;top:450px;width:80.5px;height:24px;"></div>
<div class="cell" style="left:961px;top:450px;width:80px;height:24px;"></div>
<div class="cell" style="left:1043px;top:450px;width:120.5px;height:24px;"></div>
<div class="dtl" style="left:1166px;top:451px;width:23px;height:22px;"></div>
<div class="t" style="left:1171.50px;top:456px;font-size:11px;line-height:13px;transform:scaleX(0.9223);">Dtl</div>
<div class="cell" style="left:601px;top:477px;width:153px;height:23.5px;"></div>
<div class="cell" style="left:757px;top:477px;width:120px;height:23.5px;"></div>
<div class="cell" style="left:879px;top:477px;width:80.5px;height:23.5px;"></div>
<div class="cell" style="left:961px;top:477px;width:80px;height:23.5px;"></div>
<div class="cell" style="left:1043px;top:477px;width:120.5px;height:23.5px;"></div>
<div class="dtl" style="left:1166px;top:478px;width:23px;height:22px;"></div>
<div class="t" style="left:1171.50px;top:483px;font-size:11px;line-height:13px;transform:scaleX(0.9223);">Dtl</div>
<div class="cell" style="left:601px;top:503px;width:153px;height:26.5px;"></div>
<div class="cell" style="left:757px;top:503px;width:120px;height:26.5px;"></div>
<div class="cell" style="left:879px;top:503px;width:80.5px;height:26.5px;"></div>
<div class="cell" style="left:961px;top:503px;width:80px;height:26.5px;"></div>
<div class="cell" style="left:1043px;top:503px;width:120.5px;height:26.5px;"></div>
<div class="dtl" style="left:1166px;top:504px;width:23px;height:24px;"></div>
<div class="t" style="left:1171.50px;top:510px;font-size:11px;line-height:13px;transform:scaleX(0.9223);">Dtl</div>
<div class="btn" style="left:602px;top:534px;width:64px;height:14px;"></div>
<div class="t" style="left:609.70px;top:536px;font-size:9px;line-height:11px;transform:scaleX(1.0790);">Json Envio</div>
<div class="btn" style="left:668px;top:534px;width:65px;height:14px;"></div>
<div class="t" style="left:671.90px;top:536px;font-size:9px;line-height:11px;transform:scaleX(1.0518);">Json Retorno</div>
<div class="t" style="left:833.10px;top:539px;font-size:12.5px;line-height:15px;font-weight:bold;color:#7a0d14;transform:scaleX(0.9671);">Totais</div>
<div class="a" style="left:879px;top:533px;width:80px;height:23.600000000000023px;background:#e9e9e9"></div>
<div class="t" style="left:933.90px;top:538px;font-size:13.5px;line-height:16px;font-weight:bold;font-family:'Liberation Serif',serif;color:#7a0d14;transform:scaleX(1.0370);">0.00</div>
<div class="a" style="left:1001px;top:533px;width:164px;height:23.600000000000023px;background:#e9e9e9"></div>
<div class="t" style="left:1140.10px;top:538px;font-size:13.5px;line-height:16px;font-weight:bold;font-family:'Liberation Serif',serif;color:#7a0d14;transform:scaleX(1.0116);">0.00</div>
<div class="a" style="left:7px;top:594px;width:128px;height:20.5px;background:#c8d8ee;border-radius:0 0 4px 4px"></div>
<div class="t" style="left:14.60px;top:598px;font-size:11px;line-height:13px;color:#303030;transform:scaleX(0.9936);">Cadastro de Tributação</div>
<svg class="a" style="left:135px;top:593px" width="130" height="23" viewBox="0 0 130 23"><path d="M0 0 Q2.5 0.5 2.5 4 L2.5 17 Q2.5 21.5 7 21.5 L124 21.5 Q128.5 21.5 128.5 17 L128.5 4 Q128.5 0.5 130 0 Z" fill="#90b5da"/><path d="M0.5 0 Q2.5 0.5 2.5 4 L2.5 17 Q2.5 21.5 7 21.5 L124 21.5 Q128.5 21.5 128.5 17 L128.5 4 Q128.5 0.5 129.5 0" fill="none" stroke="#6a8db8" stroke-width="1"/></svg>
<div class="t" style="left:176.70px;top:598px;font-size:11px;line-height:13px;transform:scaleX(0.9619);">Simulação</div>
</body></html>
